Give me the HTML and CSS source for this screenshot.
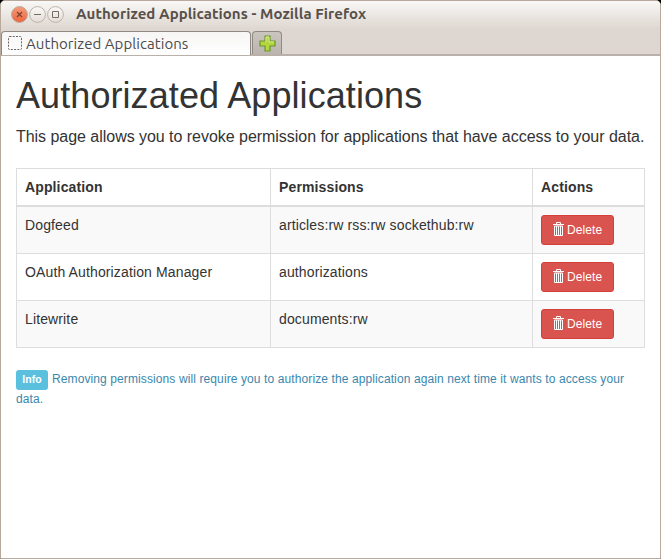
FILE: index.html
```
<!DOCTYPE html>
<html lang="en">
<head>
<meta charset="utf-8">
<title>Authorized Applications</title>
<link rel="stylesheet" href="styles.css">
</head>
<body>
<svg class="defs" width="0" height="0" aria-hidden="true">
  <symbol id="trash" viewBox="0 0 12 14">
    <path d="M3.5 2V.5h4V2M0 2.5h11" fill="none" stroke="#fff"/>
    <path d="M1.5 4v9.5h8V4zM3.5 4v9M5.5 4v9M7.5 4v9" fill="none" stroke="#fff"/>
  </symbol>
</svg>
<div class="window">
  <header class="titlebar">
    <svg class="controls" width="54" height="20" viewBox="0 0 54 20">
      <defs>
        <linearGradient id="close" x2="0" y2="1"><stop stop-color="#f59b79"/><stop offset="1" stop-color="#ee643b"/></linearGradient>
        <linearGradient id="plain" x2="0" y2="1"><stop stop-color="#fbfaf8"/><stop offset="1" stop-color="#e2dcd6"/></linearGradient>
      </defs>
      <circle cx="8.5" cy="10.5" r="7.9" fill="url(#close)" stroke="#b9a697"/>
      <circle cx="26.5" cy="10.5" r="7.9" fill="url(#plain)" stroke="#bdb2a8"/>
      <circle cx="44.5" cy="10.5" r="7.9" fill="url(#plain)" stroke="#bdb2a8"/>
      <path d="M6 8l5 5M11 8l-5 5" stroke="#79422f" stroke-width="1.2"/>
      <path d="M23 10.5h7M41.5 7.5h6v6h-6z" fill="none" stroke="#756d66"/>
    </svg>
    <span class="caption">Authorized Applications - Mozilla Firefox</span>
  </header>
  <nav class="tabs">
    <div class="tab">
      <svg width="14" height="14" viewBox="0 0 14 14"><rect x=".5" y=".5" width="13" height="13" rx="1" fill="none" stroke="#666" stroke-dasharray="2 1.25"/></svg>
      <span class="tab-label">Authorized Applications</span>
    </div>
    <div class="new-tab">
      <svg width="17" height="17" viewBox="0 0 17 17"><path d="M6 1h5v5h5v5h-5v5H6v-5H1V6h5z" fill="#b2d63c" stroke="#6a972a" stroke-width="1.2"/><path d="M7 7V2h3v5h5" fill="none" stroke="#d8eb91"/></svg>
    </div>
  </nav>
  <main>
    <h1>Authorizated Applications</h1>
    <p class="lead">This page allows you to revoke permission for applications that have access to your data.</p>
    <table>
      <colgroup><col class="c1"><col class="c2"><col class="c3"></colgroup>
      <thead><tr><th>Application</th><th>Permissions</th><th>Actions</th></tr></thead>
      <tbody>
        <tr><td>Dogfeed</td><td>articles:rw rss:rw sockethub:rw</td><td><button><svg width="12" height="14"><use href="#trash"/></svg><span>Delete</span></button></td></tr>
        <tr><td>OAuth Authorization Manager</td><td>authorizations</td><td><button><svg width="12" height="14"><use href="#trash"/></svg><span>Delete</span></button></td></tr>
        <tr><td>Litewrite</td><td>documents:rw</td><td><button><svg width="12" height="14"><use href="#trash"/></svg><span>Delete</span></button></td></tr>
      </tbody>
    </table>
    <p class="note"><span class="label">Info</span><span class="note-text">Removing permissions will require you to authorize the application again next time it wants to access your<br></span>data.</p>
  </main>
</div>
</body>
</html>
```
FILE: styles.css
```
* { box-sizing: border-box; }
body { margin: 0; background: #000; color: #333; font: 14px/20px "Liberation Sans", Arial, sans-serif; }
.defs { position: absolute; }
.window { height: 559px; border: 1px solid #b8a99c; border-radius: 5px 5px 0 0; background: #fff; overflow: hidden; }
.titlebar { height: 28px; display: flex; align-items: flex-start; padding: 3px 0 0 10px; background: linear-gradient(#f9f8f6, #ded6d0); }
.caption { margin-left: 11px; font: bold 15px/20px Ubuntu, "Noto Sans", sans-serif; letter-spacing: .07px; color: #57504a; white-space: nowrap; }
.tabs { height: 27px; padding: 2px 0 0; display: flex; background: #ded6d0; border-bottom: 2px solid #b8b0a9; }
.tab { width: 250px; height: 24px; display: flex; align-items: center; padding: 0 0 1px 6px; background: linear-gradient(#f7f6f5, #fff); border: 1px solid #8f8983; border-bottom: 0; border-radius: 4px 4px 0 0; }
.tab-label { margin: 2px 0 0 4px; font: 15px/20px Ubuntu, "Noto Sans", sans-serif; letter-spacing: .06px; color: #4c4c4c; white-space: nowrap; }
.new-tab { width: 30px; height: 23px; margin-left: 1px; padding: 3px 0 0 6px; background: linear-gradient(#cbc5c0, #bbb5b0); border: 1px solid #8f8983; border-bottom: 0; border-radius: 4px 4px 0 0; }
.new-tab svg { display: block; }
main { padding: 20px 15px 0; }
h1 { margin: 0; font-size: 36px; line-height: 40px; font-weight: 400; letter-spacing: .08px; white-space: nowrap; }
.lead { margin: 10px 0 20px; font-size: 16px; line-height: 22px; letter-spacing: -.035px; white-space: nowrap; }
table { width: 629px; table-layout: fixed; border-collapse: separate; border-spacing: 0; border: solid #ddd; border-width: 1px 0 0 1px; }
.c1 { width: 254px; }
.c2 { width: 262px; }
.c3 { width: 112px; }
th, td { padding: 8px; border: solid #ddd; border-width: 0 1px 1px 0; text-align: left; vertical-align: top; white-space: nowrap; letter-spacing: .13px; }
th { height: 38px; border-bottom-width: 2px; }
td { height: 47px; }
tbody tr:nth-child(odd) { background: #f9f9f9; }
button { display: flex; align-items: center; width: 73px; height: 30px; padding: 0 0 0 11px; border: 1px solid #d43f3a; border-radius: 3px; background: #d9534f; color: #fff; font: 12px/18px "Liberation Sans", Arial, sans-serif; letter-spacing: .1px; }
button svg { margin: -2px 2px 0 0; flex: none; }
.note { margin: 21px 0 0; font-size: 12px; line-height: 20px; letter-spacing: .105px; color: #3a87ad; white-space: nowrap; }
.label { display: inline-block; width: 32px; height: 20px; margin: 1px 4px -1px 0; border-radius: 3px; background: #5bc0de; color: #fff; font-size: 10.5px; font-weight: 700; line-height: 18px; text-align: center; vertical-align: top; }
```
